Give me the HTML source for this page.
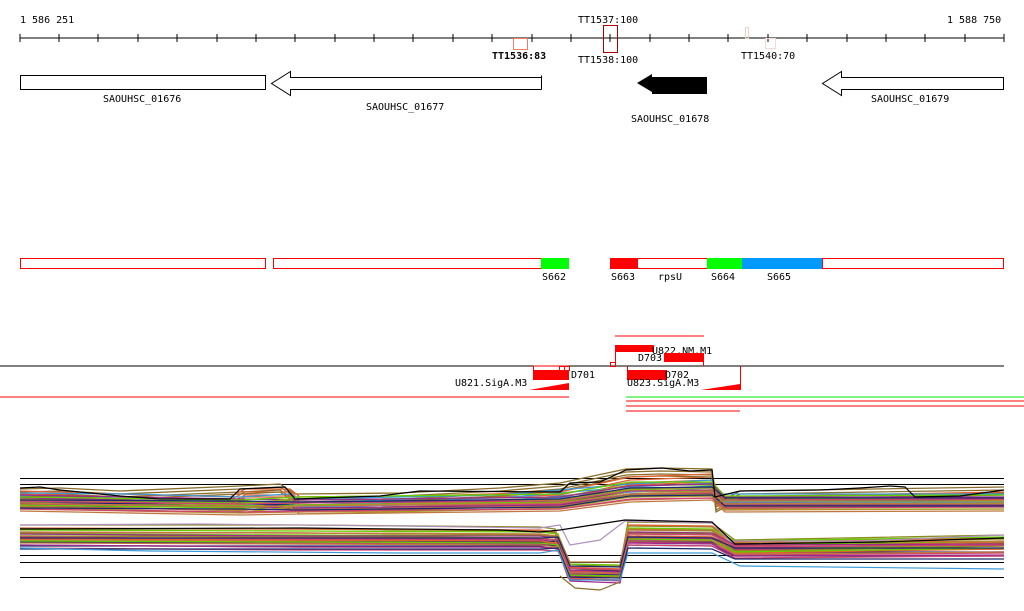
<!DOCTYPE html>
<html><head><meta charset="utf-8"><style>
html,body{margin:0;padding:0;background:#fff;width:1024px;height:611px;overflow:hidden}
svg{display:block}
text{font-family:"DejaVu Sans Mono","Liberation Mono",monospace;font-size:10px;fill:#000}
</style></head><body>
<svg width="1024" height="611" viewBox="0 0 1024 611">
<defs>
<g id="top" fill="none" stroke-width="1.3">
<polyline stroke="#8a6d2a" points="20,495 60,494 120,497 240,492 280,490 295,500 400,499 500,494 560,489 626,475 660,474 712,475 716,510 740,497 1004,493"/>
<polyline stroke="#e06030" points="20,497 120,500 230,503 245,495 290,495 300,503 420,502 560,498 630,483 712,480 718,503 1004,498"/>
<polyline stroke="#3a9ad9" points="20,499 130,500 240,503 290,500 300,505 500,501 630,490 712,486 720,500 1004,500"/>
<polyline stroke="#9c2a8a" points="20,501 240,505 300,506 560,503 630,492 712,490 725,503 1004,503"/>
<polyline stroke="#66cc00" points="20,503 240,506 300,503 560,500 630,488 712,488 725,502 1004,501"/>
<polyline stroke="#a0a020" points="20,505 130,508 240,511 290,505 300,512 560,506 630,495 712,494 725,507 1004,507"/>
<polyline stroke="#d04070" points="20,507 240,510 300,509 560,507 630,497 712,496 725,506 1004,505"/>
<polyline stroke="#c07840" points="20,509 240,513 300,512 560,509 630,500 712,498 725,510 1004,509"/>
<polyline stroke="#1b2a6a" points="20,506 240,507 300,508 560,505 630,494 712,493 725,504 1004,504"/>
</g>
<g id="bot" fill="none" stroke-width="1.3">
<polyline stroke="#8a8a20" points="20,533 300,533 540,535 555,537 568,572 620,575 628,530 712,531 735,548 1004,543"/>
<polyline stroke="#e06030" points="20,536 300,537 540,538 556,540 568,575 620,577 628,533 712,534 735,550 1004,546"/>
<polyline stroke="#66cc00" points="20,538 300,539 540,540 558,542 570,572 620,573 628,536 712,537 735,549 1004,545"/>
<polyline stroke="#9c2a8a" points="20,542 300,544 540,544 558,546 570,578 620,580 628,540 712,541 735,553 1004,552"/>
<polyline stroke="#c07840" points="20,540 300,541 540,542 558,544 570,570 620,570 628,538 712,538 735,551 1004,549"/>
<polyline stroke="#d04070" points="20,545 300,547 540,547 558,548 570,576 620,578 628,542 712,543 735,555 1004,553"/>
<polyline stroke="#1b2a6a" points="20,546 300,546 540,546 558,545 570,574 620,575 628,545 712,546 735,556 1004,556"/>
</g>
</defs>
<text x="20" y="23">1 586 251</text>
<text x="947" y="23">1 588 750</text>
<line x1="20" y1="38" x2="1004" y2="38" stroke="#000"/>
<g stroke="#000">
<line x1="20" y1="34" x2="20" y2="42"/><line x1="59" y1="34" x2="59" y2="42"/><line x1="98" y1="34" x2="98" y2="42"/><line x1="138" y1="34" x2="138" y2="42"/><line x1="177" y1="34" x2="177" y2="42"/><line x1="217" y1="34" x2="217" y2="42"/><line x1="256" y1="34" x2="256" y2="42"/><line x1="295" y1="34" x2="295" y2="42"/><line x1="335" y1="34" x2="335" y2="42"/><line x1="374" y1="34" x2="374" y2="42"/><line x1="413" y1="34" x2="413" y2="42"/><line x1="453" y1="34" x2="453" y2="42"/><line x1="492" y1="34" x2="492" y2="42"/><line x1="532" y1="34" x2="532" y2="42"/><line x1="571" y1="34" x2="571" y2="42"/><line x1="610" y1="34" x2="610" y2="42"/><line x1="650" y1="34" x2="650" y2="42"/><line x1="689" y1="34" x2="689" y2="42"/><line x1="728" y1="34" x2="728" y2="42"/><line x1="768" y1="34" x2="768" y2="42"/><line x1="807" y1="34" x2="807" y2="42"/><line x1="847" y1="34" x2="847" y2="42"/><line x1="886" y1="34" x2="886" y2="42"/><line x1="925" y1="34" x2="925" y2="42"/><line x1="965" y1="34" x2="965" y2="42"/><line x1="1004" y1="34" x2="1004" y2="42"/>
</g>
<rect x="513.5" y="38.5" width="14" height="11" fill="none" stroke="#f08060"/>
<rect x="603.5" y="25.5" width="14" height="27" fill="none" stroke="#a00"/>
<rect x="745.5" y="27.5" width="3" height="11" fill="none" stroke="#f8d0c0"/>
<rect x="765.5" y="38.5" width="10" height="10" fill="none" stroke="#f8d8d0"/>
<text x="578" y="23">TT1537:100</text>
<text x="492" y="59" font-weight="bold">TT1536:83</text>
<text x="578" y="63">TT1538:100</text>
<text x="741" y="59">TT1540:70</text>
<rect x="20.5" y="75.5" width="245" height="14" fill="none" stroke="#000"/>
<path d="M541.5 75.5V89.5M541.5 77.5H290.5V71.5L271.5 83.5L290.5 95.5V89.5H541.5" fill="none" stroke="#000"/>
<path d="M707 73V94H652V92L637 83L652 74V77H707" fill="#000"/>
<rect x="651" y="77" width="56" height="13" fill="#000"/>
<path d="M1003.5 77.5H841.5V71.5L822.5 83.5L841.5 95.5V89.5H1003.5Z" fill="none" stroke="#000"/>
<text x="103" y="102">SAOUHSC_01676</text>
<text x="366" y="110">SAOUHSC_01677</text>
<text x="631" y="122">SAOUHSC_01678</text>
<text x="871" y="102">SAOUHSC_01679</text>
<g stroke="#f00" fill="none">
<rect x="20.5" y="258.5" width="245" height="10"/>
<rect x="273.5" y="258.5" width="268" height="10"/>
<rect x="610.5" y="258.5" width="97" height="10"/>
<rect x="822.5" y="258.5" width="181" height="10"/>
</g>
<rect x="541" y="258" width="28" height="11" fill="#0f0"/>
<rect x="610" y="258" width="28" height="11" fill="#f00"/>
<rect x="707" y="258" width="35" height="11" fill="#0f0"/>
<rect x="742" y="258" width="80" height="11" fill="#09f"/>
<text x="542" y="280">S662</text><text x="611" y="280">S663</text><text x="658" y="280">rpsU</text><text x="711" y="280">S664</text><text x="767" y="280">S665</text>
<line x1="0" y1="366" x2="1004" y2="366" stroke="#000"/>
<line x1="615" y1="336" x2="704" y2="336" stroke="#f00"/>
<path d="M615 345H654V352H615Z" fill="#f00"/>
<line x1="615.5" y1="345" x2="615.5" y2="366" stroke="#f00"/>
<rect x="610.5" y="362.5" width="5" height="4" fill="none" stroke="#f00"/>
<text x="652" y="354">U822.NM.M1</text>
<text x="638" y="361">D703</text>
<rect x="664" y="353" width="40" height="9" fill="#f00"/>
<line x1="703.5" y1="353" x2="703.5" y2="366" stroke="#f00"/>
<path d="M533.5 366V376M533.5 366H568.5" stroke="#f00" fill="none"/>
<rect x="533" y="370" width="36" height="10" fill="#f00"/>
<rect x="559.5" y="366.5" width="5" height="4" fill="none" stroke="#f00"/><rect x="564.5" y="366.5" width="5" height="4" fill="none" stroke="#f00"/>
<text x="571" y="378">D701</text>
<text x="455" y="386">U821.SigA.M3</text>
<path d="M529 390L569 383V390Z" fill="#f00"/>
<line x1="0" y1="397" x2="569" y2="397" stroke="#f00"/>
<line x1="627.5" y1="366" x2="627.5" y2="376" stroke="#f00"/>
<rect x="627" y="370" width="40" height="10" fill="#f00"/>
<text x="665" y="378">D702</text>
<text x="627" y="386">U823.SigA.M3</text>
<path d="M701 390L740 384V390Z" fill="#f00"/>
<line x1="740.5" y1="366" x2="740.5" y2="390" stroke="#f00"/>
<line x1="626" y1="397" x2="1024" y2="397" stroke="#0e0"/>
<line x1="626" y1="401" x2="1024" y2="401" stroke="#f00"/>
<line x1="626" y1="406" x2="1024" y2="406" stroke="#f00"/>
<line x1="626" y1="411" x2="740" y2="411" stroke="#f00"/>
<g stroke="#000"><line x1="20" y1="478.5" x2="1004" y2="478.5"/><line x1="20" y1="484.5" x2="1004" y2="484.5"/>
<line x1="20" y1="555.5" x2="1004" y2="555.5"/><line x1="20" y1="562.5" x2="1004" y2="562.5"/><line x1="20" y1="577.5" x2="1004" y2="577.5"/></g>
<use href="#top"/>
<use href="#top" transform="translate(0,-3)"/>
<use href="#top" transform="translate(0,2)"/>
<use href="#top" transform="translate(0,-6)"/>
<use href="#bot"/>
<use href="#bot" transform="translate(0,-4)"/>
<use href="#bot" transform="translate(0,3)"/>
<use href="#bot" transform="translate(0,-8)"/>
<g fill="none" stroke-width="1.2">
<polyline stroke="#000" points="20,488 40,487 60,490 120,496 160,499 230,499 240,489 285,487 295,499 380,496 420,491 560,492 570,483 600,482 626,470 662,468 690,471 712,470 715,497 740,491 820,490 860,488 890,486 905,487 915,497 960,496 1004,490"/>
<polyline stroke="#b090c0" points="20,525 200,524 400,526 540,528 560,525 570,545 600,540 625,521 712,523 730,541 860,541 1004,535"/>
<polyline stroke="#000" points="20,529 300,528 500,530 540,532 560,530 625,520 712,522 735,544 880,542 1004,538"/>
<polyline stroke="#3a9ad9" points="20,548 150,551 400,553 540,553 558,550 570,580 620,580 628,553 712,553 740,566 1004,569"/>
<polyline stroke="#8a6d2a" points="560,576 575,588 600,590 620,582"/>
</g>
</svg>
</body></html>
